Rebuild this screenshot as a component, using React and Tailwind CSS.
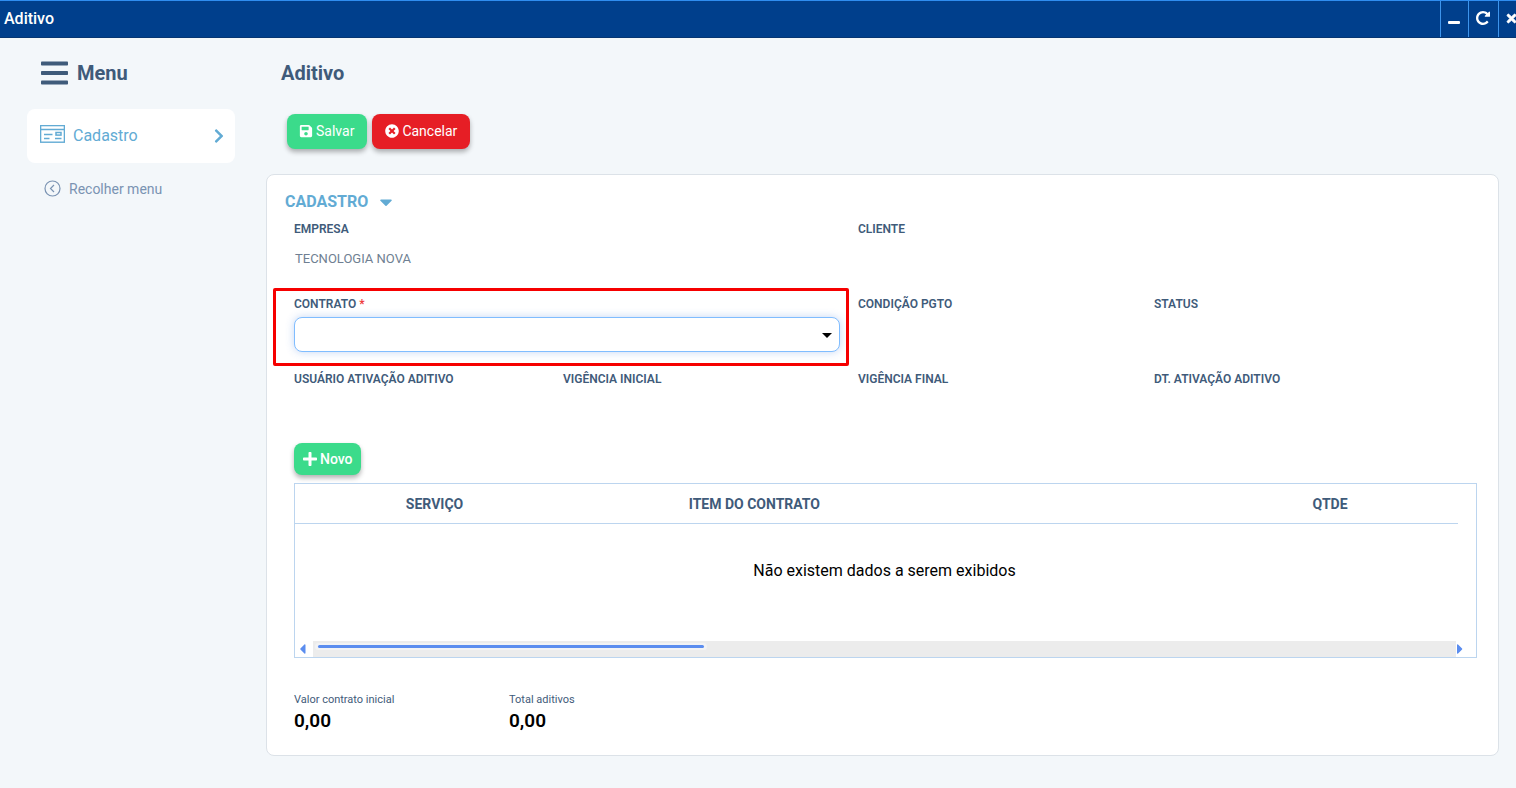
import React from "react";
import { FaSave, FaTimesCircle, FaPlus, FaCaretDown, FaCaretLeft, FaCaretRight, FaChevronRight, FaTimes } from "react-icons/fa";

function RepeatIcon() {
  return (
    <svg width="14" height="14" viewBox="0 128 1536 1536" fill="currentColor" aria-hidden="true">
      <path d="M1536 256v448q0 26-19 45t-45 19h-448q-42 0-59-40-17-39 14-69l138-138q-148-137-349-137-104 0-198.5 40.5t-163.5 109.5-109.5 163.5-40.5 198.5 40.5 198.5 109.5 163.5 163.5 109.5 198.5 40.5q119 0 225-52t179-147q7-10 23-12 15 0 25 9l137 138q9 8 9.5 20.5t-7.5 22.5q-109 132-264 204.5t-327 72.5q-156 0-298-61t-245-164-164-245-61-298 61-298 164-245 245-164 298-61q147 0 284.5 55.5t244.5 156.5l130-129q29-31 70-14 39 17 39 59z" />
    </svg>
  );
}

function TitleBar() {
  return (
    <header className="flex h-[38px] overflow-hidden border-t border-b border-t-[#2f8df0] border-b-[#063672] bg-[#003f8c] text-white">
      <h1 className="flex-1 pl-1 text-base leading-9 font-medium">Aditivo</h1>
      <button aria-label="Minimizar" className="flex w-7 items-center justify-center border-l border-[#3d94ec] pt-[6px] pr-px">
        <svg width="12" height="3" viewBox="0 0 12 3" aria-hidden="true">
          <rect width="12" height="3" rx="1" fill="currentColor" />
        </svg>
      </button>
      <button aria-label="Recarregar" className="flex w-[30px] items-center justify-center border-l border-[#3d94ec] pr-px pb-[2px]">
        <RepeatIcon />
      </button>
      <button aria-label="Fechar" className="flex w-[18px] items-center border-l border-[#3d94ec] pb-[2px] pl-[6px]">
        <FaTimes size={13} strokeWidth="30" stroke="currentColor" className="shrink-0" />
      </button>
    </header>
  );
}

function Sidebar() {
  return (
    <aside className="w-[266px] shrink-0 pl-[27px]">
      <button className="flex h-[70px] items-center gap-[9px] pl-[14px] text-[#3f5b7a]">
        <svg width="27" height="24" viewBox="0 0 27 24" fill="currentColor" aria-hidden="true">
          <rect y="0.500" width="27" height="4" rx="0.800" />
          <rect y="10" width="27" height="4" rx="0.800" />
          <rect y="19.500" width="27" height="4" rx="0.800" />
        </svg>
        <span className="text-xl font-bold">Menu</span>
      </button>
      <nav className="w-[208px]">
        <a href="#cadastro" className="mt-px flex h-[54px] items-center rounded-lg bg-white pr-2 pl-[13px] text-[#62abd4]">
          <svg width="25" height="18" viewBox="0 0 25 18" fill="none" stroke="currentColor" className="mb-1" aria-hidden="true">
            <rect x="0.600" y="0.600" width="23.800" height="16.600" strokeWidth="1.400" />
            <path d="M0.500 4.500H24.500" strokeWidth="1.500" />
            <path d="M4 9.500H12.500M4 13.500H9.500M15 13.500H21.500" strokeWidth="1.400" />
            <rect x="16" y="7.500" width="5" height="2.600" strokeWidth="1.500" />
          </svg>
          <span className="ml-2 flex-1 text-base">Cadastro</span>
          <FaChevronRight size={16} aria-hidden="true" />
        </a>
        <button className="mt-[14px] flex items-center gap-2 pl-[17px] text-sm leading-6 text-[#7a93b2]">
          <svg width="17" height="17" viewBox="0 0 17 17" fill="none" stroke="currentColor" className="mb-[2px]" aria-hidden="true">
            <circle cx="8.500" cy="8.500" r="7.500" strokeWidth="1.200" />
            <path d="M10 5L6.500 8.500L10 12" strokeWidth="1.200" />
          </svg>
          Recolher menu
        </button>
      </nav>
    </aside>
  );
}

function Field({ label, value, className = "" }) {
  return (
    <div className={`h-[75px] ${className}`}>
      <h3 className="text-xs leading-4 font-semibold text-[#3f5b7a]">{label}</h3>
      {value && <p className="mt-3 pl-px text-[13px] leading-5 text-[#6f7f92]">{value}</p>}
    </div>
  );
}

function ContractField() {
  return (
    <div className="relative col-span-2 h-[75px] pr-[18px]">
      <label htmlFor="contrato" className="block text-xs leading-4 font-semibold text-[#3f5b7a]">
        Contrato <span className="text-[#ee3b3b]">*</span>
      </label>
      <div className="relative mt-[5px]">
        <select
          id="contrato"
          className="h-[35px] w-full appearance-none rounded-lg border border-[#80bdff] bg-white px-3 shadow-[0_0_8px_rgba(60,120,220,0.3)] outline-none"
        >
          <option value=""></option>
        </select>
        <svg width="10" height="5" viewBox="0 0 10 5" className="pointer-events-none absolute top-4 right-2" aria-hidden="true">
          <path d="M0 0H10L5 5Z" fill="#000" />
        </svg>
      </div>
      <div className="pointer-events-none absolute -top-2 right-[9px] bottom-[5px] -left-[21px] rounded-xs border-3 border-[#f60000]" />
    </div>
  );
}

function ItemsTable() {
  return (
    <section className="mt-2 border border-[#bcd5ef]">
      <table className="mr-[18px] w-[calc(100%-18px)] table-fixed border-collapse">
        <colgroup>
          <col className="w-[24%]" />
          <col className="w-[31%]" />
          <col className="w-[23%]" />
          <col className="w-[22%]" />
        </colgroup>
        <thead>
          <tr className="h-[39px] border-b border-[#bcd5ef] text-sm text-[#3f5b7a]">
            <th className="pt-[2px] font-bold">SERVIÇO</th>
            <th className="pt-[2px] font-bold">ITEM DO CONTRATO</th>
            <td></td>
            <th className="pt-[2px] font-bold">QTDE</th>
          </tr>
        </thead>
        <tbody>
          <tr>
            <td colSpan={4} className="h-[118px] pb-[22px] pl-4 text-center text-base text-black">
              Não existem dados a serem exibidos
            </td>
          </tr>
        </tbody>
      </table>
      <div className="flex h-4 items-stretch pr-[11px] text-[#5b8def]">
        <button aria-label="Rolar para a esquerda" className="flex w-[18px] items-center justify-center pr-[3px]">
          <FaCaretLeft size={16} />
        </button>
        <div className="flex-1 bg-[#ececec] pt-[2px] pl-[2px]">
          <div className="w-[calc(34%+4px)] rounded-full bg-[#f2f3f5] px-[3px] py-[2px]">
            <div className="h-[3px] rounded-full bg-[#5b8def]" />
          </div>
        </div>
        <button aria-label="Rolar para a direita" className="flex w-[9px] items-center justify-center pr-[2px]">
          <FaCaretRight size={16} className="shrink-0" />
        </button>
      </div>
    </section>
  );
}

function Total({ label, value }) {
  return (
    <div className="w-[215px]">
      <dt className="text-[11px] leading-4 text-[#3f5b7a]">{label}</dt>
      <dd className="text-[19px] leading-[26px] font-semibold text-black">{value}</dd>
    </div>
  );
}

export default function App() {
  return (
    <div className="min-h-screen bg-[#f3f7fa] font-['Roboto',sans-serif]">
      <TitleBar />
      <div className="flex">
        <Sidebar />
        <main className="min-w-0 flex-1 pr-[17px] pb-8">
          <h2 className="pl-[15px] text-xl leading-[70px] font-bold text-[#3f5b7a]">Aditivo</h2>
          <div className="mt-[6px] flex gap-[5px] pl-[21px] text-sm text-white">
            <button className="flex h-[35px] items-center gap-[3px] rounded-lg bg-[#3bdb8b] pr-[13px] pb-px pl-3 shadow-[0_3px_5px_rgba(0,0,0,0.3)]">
              <FaSave size={14} />
              Salvar
            </button>
            <button className="flex h-[35px] items-center gap-[3px] rounded-lg bg-[#e61e25] px-[13px] pb-px shadow-[0_3px_5px_rgba(0,0,0,0.3)]">
              <FaTimesCircle size={14} />
              Cancelar
            </button>
          </div>
          <div className="mt-[25px] rounded-lg border border-[#dce2e8] bg-white pt-[15px] pr-[21px] pb-[21px] pl-[27px]">
            <button className="-ml-[9px] flex items-center gap-2 text-base leading-6 font-bold text-[#62abd4]">
              CADASTRO
              <FaCaretDown size={20} />
            </button>
            <div className="mt-[7px] grid grid-cols-[269fr_295fr_296fr_323fr] uppercase">
              <Field label="Empresa" value="Tecnologia Nova" className="col-span-2" />
              <Field label="Cliente" className="col-span-2" />
              <ContractField />
              <Field label="Condição Pgto" />
              <Field label="Status" />
              <Field label="Usuário ativação aditivo" />
              <Field label="Vigência inicial" />
              <Field label="Vigência final" />
              <Field label="Dt. ativação aditivo" />
            </div>
            <button className="-mt-[3px] flex h-8 items-center gap-[2px] rounded-lg bg-[#3bdb8b] px-2 text-sm font-medium text-white shadow-[0_3px_5px_rgba(0,0,0,0.3)]">
              <FaPlus size={16} />
              Novo
            </button>
            <ItemsTable />
            <dl className="mt-[34px] flex">
              <Total label="Valor contrato inicial" value="0,00" />
              <Total label="Total aditivos" value="0,00" />
            </dl>
          </div>
        </main>
      </div>
    </div>
  );
}
